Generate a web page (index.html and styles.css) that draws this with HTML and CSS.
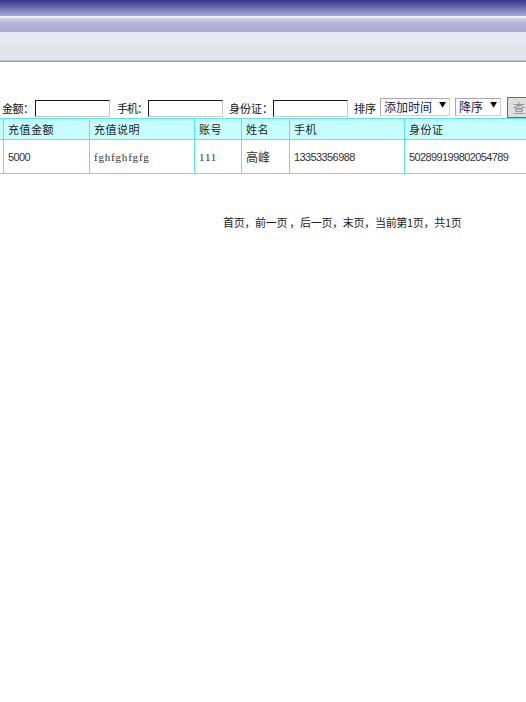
FILE: index.html
```html
<!DOCTYPE html>
<html lang="zh-CN">
<head>
<meta charset="utf-8">
<title>充值记录</title>
<link rel="stylesheet" href="styles.css">
</head>
<body>
<div class="topbar">
  <div class="band-dark"></div>
  <div class="band-white"></div>
  <div class="band-mid"></div>
  <div class="band-light1"></div>
  <div class="band-light2"></div>
  <div class="band-line1"></div>
  <div class="band-line2"></div>
</div>
<div class="page">
  <form class="search">
    <label class="lbl lbl-first">金额：</label>
    <input class="txt txt1" type="text">
    <label class="lbl lbl-phone">手机：</label>
    <input class="txt txt2" type="text">
    <label class="lbl lbl-id">身份证：</label>
    <input class="txt txt3" type="text">
    <span class="lbl lbl-sort">排序</span>
    <span class="sel sel-time">添加时间<span class="arrow">▼</span></span>
    <span class="sel sel-order">降序<span class="arrow">▼</span></span>
    <span class="btn">查</span>
  </form>
  <table class="grid">
    <colgroup>
      <col class="c0"><col class="c1"><col class="c2"><col class="c3"><col class="c4"><col class="c5"><col class="c6">
    </colgroup>
    <thead>
      <tr>
        <th></th><th>充值金额</th><th>充值说明</th><th>账号</th><th>姓名</th><th>手机</th><th>身份证</th>
      </tr>
    </thead>
    <tbody>
      <tr>
        <td></td><td class="num">5000</td><td class="serif">fghfghfgfg</td><td class="serif">111</td><td class="cjk">高峰</td><td class="num">13353356988</td><td class="num">502899199802054789</td>
      </tr>
    </tbody>
  </table>
  <div class="pager">首页，前一页 ，后一页，末页，当前第1页，共1页</div>
</div>
</body>
</html>
```
FILE: styles.css
```css
html, body {
  margin: 0;
  padding: 0;
  background: #ffffff;
  overflow: hidden;
}
body {
  width: 526px;
  height: 702px;
  font-family: "Noto Sans CJK SC", "Liberation Sans", sans-serif;
  color: #111;
}
.topbar {
  display: flex;
  flex-direction: column;
  width: 100%;
}
.band-dark {
  height: 16px;
  background: linear-gradient(#35378c, #5a5ca4 35%, #8e8fc4 75%, #a9a9d4);
}
.band-white {
  height: 2px;
  background: #f3f3fa;
}
.band-mid {
  height: 14px;
  background: linear-gradient(#d6d6e8, #b3b3d4 40%, #a9a9cd);
}
.band-light1 {
  height: 13px;
  background: #e8e8f2;
}
.band-light2 {
  height: 15px;
  background: #e3e3ed;
}
.band-line1 {
  height: 1px;
  background: #c4c4cc;
}
.band-line2 {
  height: 1px;
  background: #9a9a9a;
}
.page {
  display: flex;
  flex-direction: column;
}
.search {
  display: flex;
  align-items: center;
  margin: 36px 0 0 0;
  height: 20px;
  white-space: nowrap;
  font-size: 11px;
}
.lbl {
  line-height: 16px;
  flex: none;
  color: #111;
}
.lbl-first {
  margin-left: 2px;
  letter-spacing: -0.5px;
  width: 33px;
}
.txt {
  flex: none;
  box-sizing: border-box;
  width: 75px;
  height: 17px;
  margin: 1px 0 0 0;
  padding: 0;
  border: 1px solid #1a1a1a;
  border-right-color: #c8c8c8;
  border-bottom-color: #c8c8c8;
  background: #fff;
}
.lbl-phone { margin-left: 7px; width: 31px; letter-spacing: -1px; }
.lbl-id { margin-left: 6px; width: 44px; }
.lbl-sort { margin-left: 6px; width: 26px; }
.sel {
  flex: none;
  box-sizing: border-box;
  display: flex;
  align-items: center;
  height: 18px;
  margin-top: -3px;
  padding: 0 3px 0 3px;
  border: 1px solid #a8a8a8;
  border-right-color: #d0d0d0;
  border-bottom-color: #d0d0d0;
  background: #fff;
  font-size: 12px;
  line-height: 16px;
  color: #1c2050;
}
.sel-time { width: 70px; margin-left: 0; }
.sel-order { width: 46px; margin-left: 5px; }
.arrow {
  margin-left: auto;
  font-size: 7px;
  color: #000;
  margin-top: -5px;
}
.btn {
  flex: none;
  box-sizing: border-box;
  width: 30px;
  height: 21px;
  margin-left: 6px;
  margin-top: -1px;
  padding-left: 5px;
  border: 1px solid #6a6a6a;
  background: #dedede;
  font-size: 12px;
  line-height: 19px;
  color: #8a8a8a;
}
.grid {
  border-collapse: collapse;
  table-layout: fixed;
  width: 700px;
  margin: 0 0 0 -30px;
  font-size: 11px;
}
.c0 { width: 33px; }
.c1 { width: 86px; }
.c2 { width: 105px; }
.c3 { width: 47px; }
.c4 { width: 48px; }
.c5 { width: 115px; }
.c6 { width: 266px; }
.grid th, .grid td {
  border: 1px solid #56e8ee;
  padding: 0 4px;
  text-align: left;
  white-space: nowrap;
  overflow: hidden;
}
.grid th {
  height: 20px;
  background: #c8fdfd;
  font-weight: normal;
  letter-spacing: 0.5px;
  color: #222;
}
.grid td {
  height: 33px;
  background: #fff;
  color: #333;
}
.num {
  font-family: "Liberation Sans", sans-serif;
  letter-spacing: -0.6px;
}
.serif {
  font-family: "Liberation Serif", serif;
  letter-spacing: 0.8px;
}
.cjk {
  font-size: 12px;
}
.pager {
  margin: 40px 0 0 223px;
  font-size: 11px;
  letter-spacing: -0.3px;
  white-space: nowrap;
  color: #222;
}
```
